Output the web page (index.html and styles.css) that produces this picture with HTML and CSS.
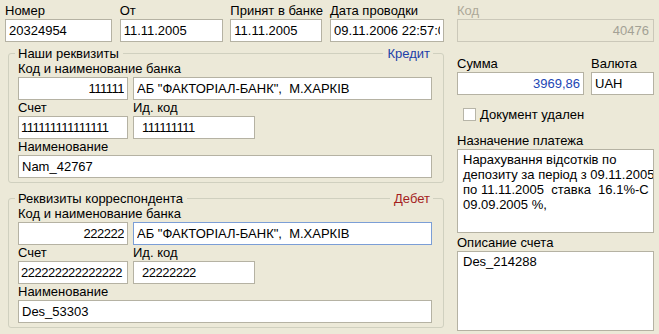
FILE: index.html
```html
<!DOCTYPE html>
<html lang="ru">
<head>
    <meta charset="UTF-8">
    <title>Платежное поручение</title>
    <link rel="stylesheet" href="styles.css">
</head>
<body>

    <div class="form">

        <div class="main">

            <div class="top">
                <div class="field w-num">
                    <label>Номер</label>
                    <input type="text" value="20324954" readonly>
                </div>
                <div class="field w-date">
                    <label>От</label>
                    <input type="text" value="11.11.2005" readonly>
                </div>
                <div class="field w-bank">
                    <label>Принят в банке</label>
                    <input type="text" value="11.11.2005" readonly>
                </div>
                <div class="field w-post">
                    <label>Дата проводки</label>
                    <input type="text" value="09.11.2006 22:57:05" readonly>
                </div>
            </div>

            <!-- наши реквизиты -->
            <fieldset class="group">
                <legend>
                    <span>Наши реквизиты</span>
                    <span class="rule"></span>
                    <span class="credit">Кредит</span>
                </legend>

                <div class="field">
                    <label>Код и наименование банка</label>
                    <div class="pair">
                        <input type="text" class="code num" value="111111" readonly>
                        <input type="text" class="bank" value='АБ "ФАКТОРІАЛ-БАНК",  М.ХАРКІВ' readonly>
                    </div>
                </div>

                <div class="pair">
                    <div class="field w-acc">
                        <label>Счет</label>
                        <input type="text" class="num" value="111111111111111" readonly>
                    </div>
                    <div class="field w-id">
                        <label>Ид. код</label>
                        <input type="text" class="num" value="111111111" readonly>
                    </div>
                </div>

                <div class="field">
                    <label>Наименование</label>
                    <input type="text" value="Nam_42767" readonly>
                </div>
            </fieldset>

            <!-- реквизиты корреспондента -->
            <fieldset class="group second">
                <legend>
                    <span>Реквизиты корреспондента</span>
                    <span class="rule"></span>
                    <span class="debit">Дебет</span>
                </legend>

                <div class="field">
                    <label>Код и наименование банка</label>
                    <div class="pair">
                        <input type="text" class="code num" value="222222" readonly>
                        <input type="text" class="bank focus" value='АБ "ФАКТОРІАЛ-БАНК",  М.ХАРКІВ' readonly>
                    </div>
                </div>

                <div class="pair">
                    <div class="field w-acc">
                        <label>Счет</label>
                        <input type="text" class="num" value="222222222222222" readonly>
                    </div>
                    <div class="field w-id">
                        <label>Ид. код</label>
                        <input type="text" class="num" value="22222222" readonly>
                    </div>
                </div>

                <div class="field">
                    <label>Наименование</label>
                    <input type="text" value="Des_53303" readonly>
                </div>
            </fieldset>

        </div>

        <div class="side">

            <div class="field disabled">
                <label>Код</label>
                <input type="text" value="40476" disabled>
            </div>

            <div class="money">
                <div class="field w-sum">
                    <label>Сумма</label>
                    <input type="text" class="sum" value="3969,86" readonly>
                </div>
                <div class="field w-cur">
                    <label>Валюта</label>
                    <input type="text" value="UAH" readonly>
                </div>
            </div>

            <div class="check">
                <span class="box"></span>
                <span>Документ удален</span>
            </div>

            <div class="field purpose">
                <label>Назначение платежа</label>
                <textarea readonly>Нарахування відсотків по
депозиту за період з 09.11.2005
по 11.11.2005  ставка  16.1%-С
09.09.2005 %,</textarea>
            </div>

            <div class="field account">
                <label>Описание счета</label>
                <textarea readonly>Des_214288</textarea>
            </div>

        </div>

    </div>

</body>
</html>
```

FILE: styles.css
```css
body {
    margin: 0;
    background-color: #ece9d8;
    font-family: "Liberation Sans", Arial, sans-serif;
    font-size: 13px;
    color: #000;
}

.form {
    width: 659px;
    height: 334px;
    box-sizing: border-box;
    padding: 3px 0 0 5px;
    display: flex;
}

.main {
    width: 439px;
}

.side {
    width: 197px;
    margin-left: 13px;
}

label {
    display: block;
    line-height: 15px;
    margin-bottom: 1px;
    white-space: nowrap;
}

input, textarea {
    display: block;
    box-sizing: border-box;
    width: 100%;
    margin: 0;
    border: 1px solid #b5b2a3;
    background-color: #fff;
    font-family: inherit;
    font-size: 13px;
    color: #000;
    outline: none;
}

input {
    height: 23px;
    padding: 0 3px;
}

textarea {
    padding: 2px 5px;
    line-height: 15px;
    white-space: pre;
    overflow: hidden;
    resize: none;
}

.top {
    display: flex;
    justify-content: space-between;
}

.w-num { width: 107px; }
.w-date { width: 103px; }
.w-bank { width: 92px; }
.w-post { width: 114px; }

/* группы реквизитов */
.group {
    margin: 4px 0 0 3px;
    padding: 0 11px 4px 9px;
    min-width: 0;
    border: 1px solid #d0d0bf;
    border-radius: 3px;
}

.group.second {
    margin-top: 8px;
}

.group legend {
    display: flex;
    align-items: center;
    box-sizing: border-box;
    width: calc(100% + 4px);
    margin-left: -3px;
    padding: 0 3px;
    line-height: 15px;
}

.group .rule {
    flex: 1;
    height: 0;
    margin: 0 4px;
    border-top: 1px solid #d0d0bf;
}

.credit {
    color: #1d40a8;
}

.debit {
    color: #a41e1e;
}

.pair {
    display: flex;
    gap: 5px;
}

.pair .code {
    width: 110px;
    flex: none;
    text-align: right;
    padding-right: 3px;
}

.pair .bank {
    flex: 1;
}

.num {
    letter-spacing: -0.5px;
    padding-left: 2px;
}

.w-id .num {
    padding-left: 8px;
}

.focus {
    border-color: #7b9ed6;
}

.w-acc { width: 110px; }
.w-id { width: 122px; }

/* правая колонка */
.disabled label {
    color: #aca899;
}

.disabled input {
    background-color: #ece9d8;
    border-color: #cbc8b9;
    color: #a3a195;
    text-align: right;
    padding-right: 4px;
}

.money {
    display: flex;
    justify-content: space-between;
    margin-top: 14px;
}

.w-sum { width: 127px; }
.w-cur { width: 63px; }

.sum {
    text-align: right;
    color: #2346b4;
}

.check {
    display: flex;
    align-items: center;
    height: 15px;
    margin-top: 12px;
    padding-left: 6px;
}

.check .box {
    width: 11px;
    height: 11px;
    margin-right: 4px;
    border: 1px solid #b7b5a8;
    background-color: #fff;
}

.purpose {
    margin-top: 11px;
}

.purpose textarea {
    height: 84px;
}

.account {
    margin-top: 2px;
}

.account textarea {
    height: 80px;
}
```
